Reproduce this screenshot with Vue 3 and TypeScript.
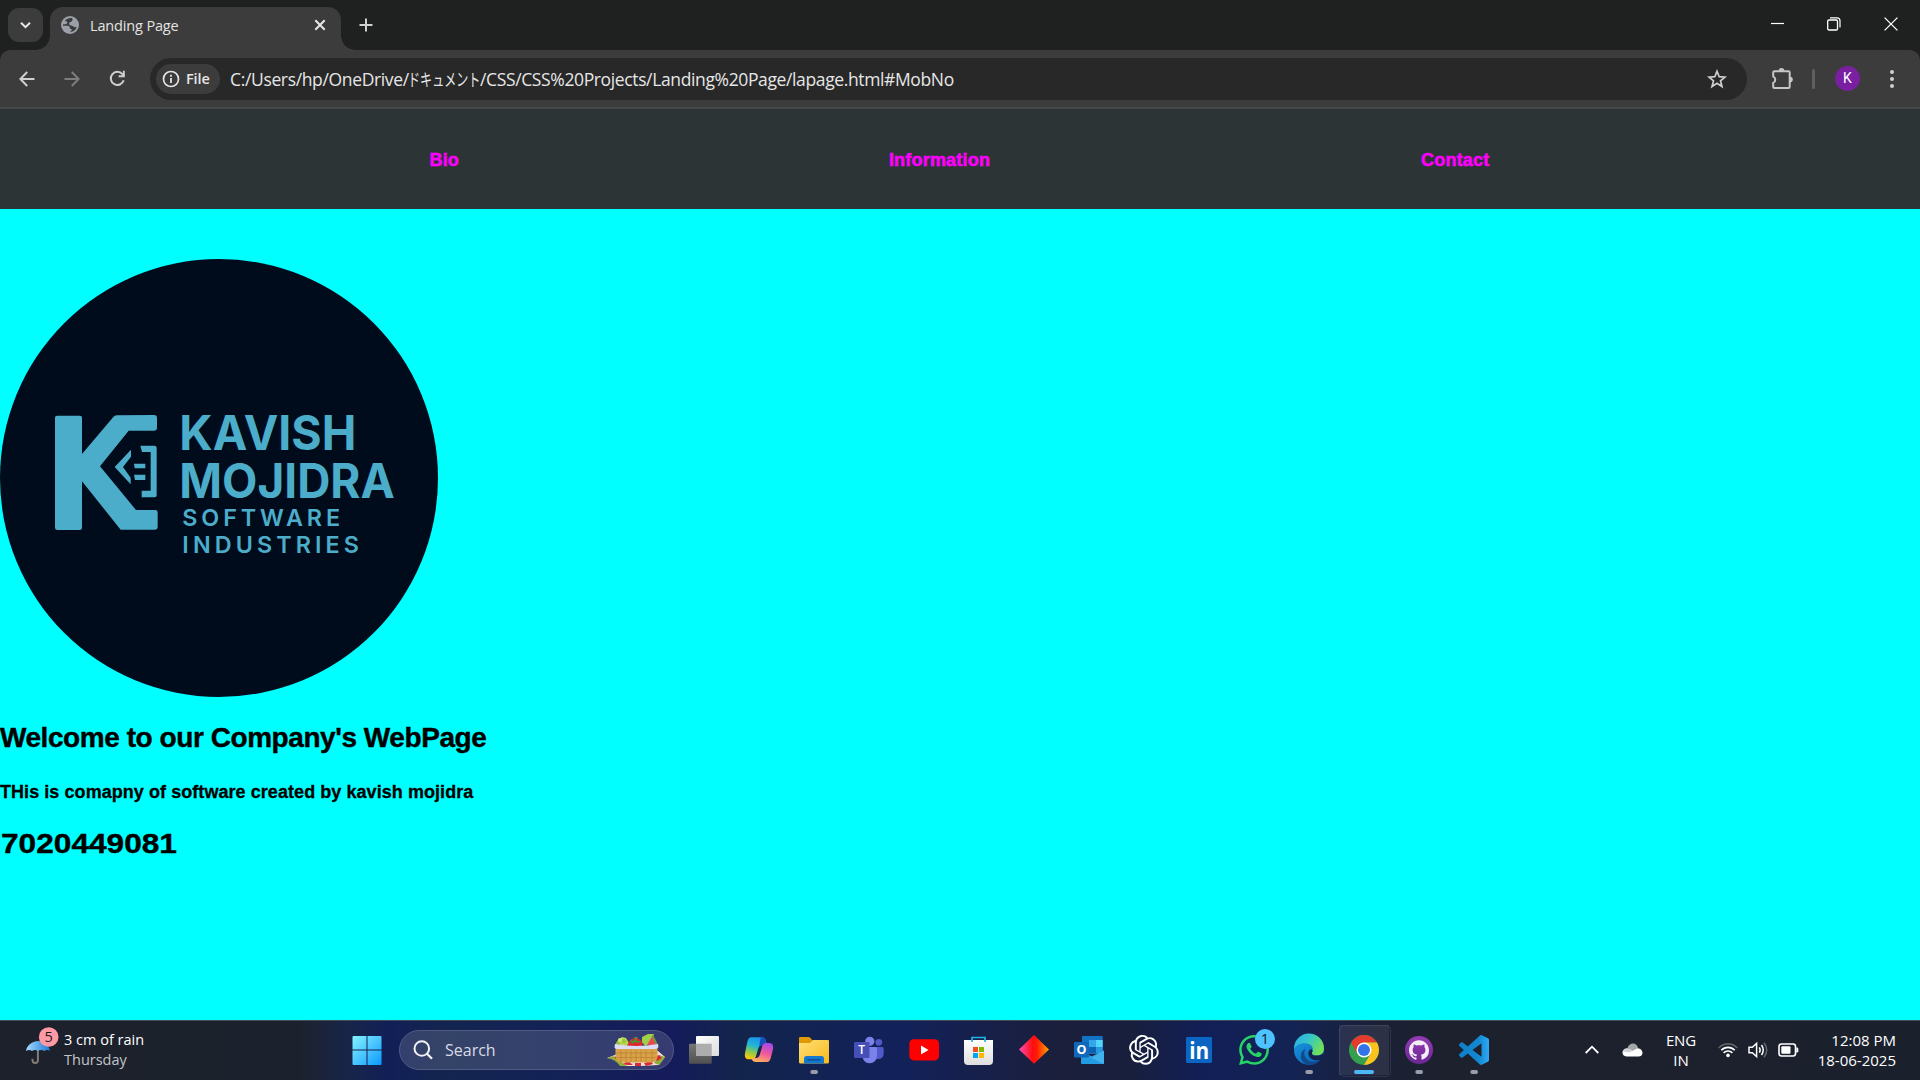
<script setup lang="ts">
interface TaskApp {
  id: string
  label: string
  running?: boolean
  active?: boolean
}

const links: string[] = ['Bio', 'Information', 'Contact']

const apps: TaskApp[] = [
  { id: 'taskview', label: 'Task View' },
  { id: 'copilot', label: 'Copilot' },
  { id: 'explorer', label: 'File Explorer', running: true },
  { id: 'teams', label: 'Teams' },
  { id: 'youtube', label: 'YouTube' },
  { id: 'store', label: 'Store' },
  { id: 'diamond', label: 'Diamond' },
  { id: 'outlook', label: 'Outlook' },
  { id: 'chatgpt', label: 'ChatGPT' },
  { id: 'linkedin', label: 'LinkedIn' },
  { id: 'whatsapp', label: 'WhatsApp' },
  { id: 'edge', label: 'Edge', running: true },
  { id: 'chrome', label: 'Chrome', running: true, active: true },
  { id: 'github', label: 'GitHub Desktop', running: true },
  { id: 'vscode', label: 'VS Code', running: true },
]
</script>

<template>
  <div class="screen">
    <header class="tabstrip">
      <button class="tab-search" aria-label="Search tabs">
        <svg width="35" height="34" viewBox="0 0 35 34"><path d="M13 14.7l4.5 4.5 4.5-4.5" fill="none" stroke="#e6e6e6" stroke-width="2" /></svg>
      </button>
      <div class="tab">
        <svg class="globe" width="18" height="18" viewBox="0 0 18 18">
          <circle cx="9" cy="9" r="9" fill="#9ba0a8" />
          <path d="M11.300 2.100C8 1.700 5.300 3 3.800 5.200c1.700-.2 2.400.3 2.500 1.400.2 1.400-1.500 1.900-4.200 1.700L2 9.700h4.600c1.500 0 2.300.8 2.200 2-.1.900.6 1.300 1.800 1.300v1.500l-1.700 1.400c3.500.2 5.900-1.900 6.800-4.900-1.600.3-2.700.2-3.300-.6-.7-1-2-.7-3.200-1.200-1.600-.7-1.500-2.900.4-3.300 1.500-.3 2.200-1 1.700-3.800z" fill="#3c3c3c" />
        </svg>
        <span class="tab-title">Landing Page</span>
        <svg width="12" height="12" viewBox="0 0 12 12"><path d="M1.300 1.300l9.400 9.400M10.700 1.300l-9.400 9.400" stroke="#e8e8e8" stroke-width="2" /></svg>
      </div>
      <svg class="plus" width="14" height="14" viewBox="0 0 14 14"><path d="M7 .5v13M.5 7h13" stroke="#d0d0d0" stroke-width="2" /></svg>
      <div class="window-controls">
        <svg width="13" height="14" viewBox="0 0 13 14"><path d="M0 6.500h13" stroke="#fff" stroke-width="1.200" /></svg>
        <svg width="14" height="14" viewBox="0 0 14 14" fill="none" stroke="#fff"><path d="M3 .9h7a3 3 0 0 1 3 3v6.600" stroke-width="1.200" /><rect x=".7" y="3" width="9.800" height="10" rx="1.200" stroke-width="1.300" /></svg>
        <svg width="14" height="14" viewBox="0 0 14 14"><path d="M.6.600l12.800 12.800M13.400.600L.6 13.400" stroke="#fff" stroke-width="1.300" /></svg>
      </div>
    </header>

    <div class="toolbar-wrap">
      <div class="toolbar">
        <svg class="back" width="16" height="16" viewBox="0 0 16 16" fill="none" stroke="#cfcfcf" stroke-width="2"><path d="M15.500 8H1.700M8.200 1L1.400 8l6.800 7" /></svg>
        <svg class="forward" width="16" height="16" viewBox="0 0 16 16" fill="none" stroke="#7d7d7d" stroke-width="2"><path d="M.5 8h13.800M7.800 1l6.800 7-6.800 7" /></svg>
        <svg class="reload" width="17" height="17" viewBox="0 0 17 17"><path d="M14.700 10.300a6.600 6.600 0 1 1-1.300-6.200l1.800 1.800" fill="none" stroke="#cfcfcf" stroke-width="2" /><path d="M15.800.8v6.400H9.600V5.300h4.300V.8z" fill="#cfcfcf" /></svg>
        <div class="omnibox">
          <div class="chip">
            <svg width="18" height="18" viewBox="0 0 18 18"><circle cx="9" cy="9" r="7.500" fill="none" stroke="#e3e3e3" stroke-width="1.700" /><path d="M9 8v5M9 4.800v1.900" stroke="#e3e3e3" stroke-width="1.800" /></svg>
            <span>File</span>
          </div>
          <span class="url"><span class="u1">C:/Users/hp/OneDrive/</span><span class="jp"><span class="jp-text">ドキュメント</span></span><span class="u2">/CSS/CSS%20Projects/Landing%20Page/lapage.html#MobNo</span></span>
          <svg class="star" width="20" height="20" viewBox="0 0 20 20"><path d="M10 2.300l2.200 5.400 5.800.4-4.500 3.700 1.500 5.700-5-3.200-5 3.200 1.500-5.700L2 8.100l5.800-.4z" fill="none" stroke="#cfcfcf" stroke-width="1.700" /></svg>
        </div>
        <svg class="puzzle" width="22" height="22" viewBox="0 0 22 22">
          <path d="M3.400 3.200h14.100q1.200 0 1.200 1.200v14.400q0 1.200-1.200 1.200H3.400q-1.200 0-1.200-1.200v-3.900a3.600 3.600 0 0 0 0-6.500v-4q0-1.200 1.200-1.200z" fill="none" stroke="#c7c7c7" stroke-width="2" />
          <path d="M7.700 2.800a2.800 2.800 0 0 1 5.600 0zM19 8.800a2.800 2.800 0 0 1 0 5.600z" fill="#c7c7c7" />
        </svg>
        <span class="divider"></span>
        <span class="avatar">K</span>
        <svg class="dots" width="4" height="20" viewBox="0 0 4 20" fill="#cfcfcf"><circle cx="2" cy="3" r="2" /><circle cx="2" cy="10" r="2" /><circle cx="2" cy="17" r="2" /></svg>
      </div>
    </div>

    <main class="page">
      <nav class="nav">
        <a v-for="link in links" :key="link" :class="link.toLowerCase()">{{ link }}</a>
      </nav>
      <svg class="logo" width="438" height="438" viewBox="0 27 1314 1314">
        <circle cx="657" cy="684" r="657" fill="#000b1b" />
        <g fill="#4badca">
          <path d="M171 497h69q6 0 6 6v109l94-111q4-5 10-5l112-1q9 0 9 9v29q0 9-9 9h-76l-86 107 108 131h58q7 0 7 7v43q0 9-9 9H362L246 694v139q0 7-7 7h-67q-7 0-7-7V503q0-6 6-6z" />
          <path d="M393 599v21l-24 31 23 32v20l-48-52z" />
          <path d="M402 641h34v14h-32zM402 674h34v16h-31z" />
          <path d="M421 587h42q7 0 7 7v142q0 6-6 6h-39v-20h27V606h-26z" />
        </g>
        <g class="logo-text">
          <text x="538" y="600" class="big" font-size="144" textLength="531" lengthAdjust="spacingAndGlyphs">KAVISH</text>
          <text x="538" y="745" class="big" font-size="142" textLength="646" lengthAdjust="spacingAndGlyphs">MOJIDRA</text>
          <text x="547" y="828" font-size="70" textLength="473" lengthAdjust="spacing">SOFTWARE</text>
          <text x="547" y="908" font-size="70" textLength="530" lengthAdjust="spacing">INDUSTRIES</text>
        </g>
      </svg>
      <h1>Welcome to our Company's WebPage</h1>
      <p>THis is comapny of software created by kavish mojidra</p>
      <h2>7020449081</h2>
    </main>

    <footer class="taskbar">
      <div class="weather">
        <svg width="36" height="44" viewBox="0 0 36 44">
          <defs><linearGradient id="umb"><stop offset="0" stop-color="#a5dcff" /><stop offset="1" stop-color="#1b78d4" /></linearGradient></defs>
          <path d="M12.900 21v12.300a2.700 2.700 0 0 1-5.400 0v-1.500" fill="none" stroke="#857b77" stroke-width="2" />
          <path d="M1 24c1-6 6-9.500 12-10 6 .5 11 4 12 10q-3-2-5.500 0-3.500-2-6.500 0-3-2-6 0-3-2-6 0z" fill="url(#umb)" />
          <circle cx="23.700" cy="10" r="9.800" fill="#ff9aa5" />
          <text x="23.700" y="15.300" text-anchor="middle" class="badge-num">5</text>
        </svg>
        <div class="weather-text"><span>3 cm of rain</span><span class="day">Thursday</span></div>
      </div>

      <svg class="start" width="30" height="30" viewBox="0 0 30 30">
        <defs><linearGradient id="win" x2="1" y2="1"><stop offset="0" stop-color="#83f3ff" /><stop offset=".5" stop-color="#4cc5ff" /><stop offset="1" stop-color="#089bff" /></linearGradient></defs>
        <path d="M1.500 1H14.500V14.500H.5V2q0-1 1-1zM15.500 1H28.500q1 0 1 1V14.500H15.500zM.5 15.500H14.500V30H1.500q-1 0-1-1zM15.500 15.500H29.500V29q0 1-1 1H15.500z" fill="url(#win)" />
      </svg>

      <div class="search">
        <svg width="20" height="20" viewBox="0 0 20 20" fill="none" stroke="#f2f3f7" stroke-width="2"><circle cx="8.800" cy="8.500" r="7.300" /><path d="M14 13.700l5 5" stroke-width="2.300" /></svg>
        <span>Search</span>
        <svg class="picnic" width="60" height="34" viewBox="0 0 60 34">
          <path d="M1 25l18-7h33l7 6-6 8-18 1H19q-8-8-18-8z" fill="#f3dfdc" />
          <path d="M1 25l6-2 14 10H14q-5-7-13-8zM53 22l6 2-6 8-5-2z" fill="#8fae35" />
          <path d="M8 24l5-2 5 4-5 3zM17 31l5-3 5 4h-6zM29 30h6v3h-6zM38 30l7-2 2 3-7 2zM49 24l4-2 3 3-5 3z" fill="#d92b35" />
          <path d="M9.500 15h42v8.500q-1 6-7 6H16.500q-7 0-7-6z" fill="#d9a248" />
          <path d="M10 20h41M10.500 24.500h40M15 17v12M20 17v12M25 17v12M30 17v12M35 17v12M40 17v12M46 17v12" stroke="#b37a2b" stroke-width=".6" />
          <path d="M9 12l3-5 4-3 4 1 3 5-2 3H9z" fill="#b5d652" />
          <circle cx="14" cy="7" r="2" fill="#cfe878" /><circle cx="18" cy="8" r="2" fill="#9dc43c" /><circle cx="12" cy="11" r="2" fill="#8fbd38" />
          <path d="M21 13l3-6 6-3 7 5-1 4z" fill="#dd2630" />
          <path d="M24 7l3 1 3-3 1 3 4 0-3 2-3-1-3 2zM28 4l4 0-2 2z" fill="#439a35" />
          <path d="M36 4l6-3 6 0-4 10-5 2-3-4z" fill="#9cd04a" />
          <path d="M47 2l5 10H41z" fill="#ef4653" /><path d="M47 2l5 10h-2L46 4z" fill="#5ba53a" />
          <path d="M9 11q21 4 43 0l.5 3q-1 2-4 2H12.500q-4 0-4-2z" fill="#dcdcf7" />
        </svg>
      </div>

      <div class="apps">
        <div v-for="app in apps" :key="app.id" class="app" :class="{ active: app.active }" :aria-label="app.label">
          <svg width="55" height="60" viewBox="0 0 55 60">
            <template v-if="app.id === 'taskview'">
              <defs>
                <linearGradient id="tv" x2="1" y2="1"><stop offset="0" stop-color="#fff" /><stop offset="1" stop-color="#dcdcdc" /></linearGradient>
                <linearGradient id="tvg" x2="0" y2="1"><stop offset="0" stop-color="#777" /><stop offset="1" stop-color="#505050" /></linearGradient>
              </defs>
              <rect x="13" y="23.700" width="22.700" height="20" rx="1" fill="url(#tvg)" />
              <rect x="20" y="16" width="23" height="20" rx="1" fill="url(#tv)" />
              <path d="M20 23.700h15.700V36H20z" fill="#adadad" />
            </template>

            <template v-else-if="app.id === 'copilot'">
              <defs>
                <linearGradient id="cpa" x1=".6" x2=".3" y2="1"><stop offset="0" stop-color="#1d8fec" /><stop offset=".4" stop-color="#22b5d5" /><stop offset=".7" stop-color="#8bcb4c" /><stop offset="1" stop-color="#ffc800" /></linearGradient>
                <linearGradient id="cpb" x1=".7" x2=".3" y2="1"><stop offset="0" stop-color="#a548e8" /><stop offset=".5" stop-color="#f0599b" /><stop offset="1" stop-color="#ffb35a" /></linearGradient>
              </defs>
              <path d="M20 17.300h11q3 0 4 4l1 4h-5q-3 0-4 4l-2 7q-1 3-4 3h-3q-5 0-4-6l2-10q1-6 4-6z" fill="url(#cpa)" />
              <path d="M30 17.300h1.500q2.500.3 3.500 4l1 4h-5q-2 0-3 2l1-6q.5-3 1-4z" fill="#174fbb" />
              <path d="M25 42h11q3 0 4-5l2-8q1-6-4-6h-3q-3 0-4 4l-2 7q-1 4-4 4h-5l1 2q1 2 4 2z" fill="url(#cpb)" />
            </template>

            <template v-else-if="app.id === 'explorer'">
              <defs><linearGradient id="fe" x2="1" y2="1"><stop offset="0" stop-color="#ffe079" /><stop offset="1" stop-color="#f8b91a" /></linearGradient></defs>
              <path d="M13 18q0-1 1-1h8.500q1 0 2 1l2 2.500h4V26H13z" fill="#dd9a05" />
              <path d="M13 23h11l3-3h15q1 0 1 1v21q0 1.500-1.500 1.500h-27Q13 43.500 13 42z" fill="url(#fe)" />
              <path d="M18 43.500v-5q0-2.500 2.500-2.500h15q2.500 0 2.500 2.500v5z" fill="#1479cc" />
              <path d="M21.500 39.800h13" stroke="#0a4f98" stroke-width="1.500" />
            </template>

            <template v-else-if="app.id === 'teams'">
              <circle cx="37.800" cy="22.300" r="3.400" fill="#5059c9" />
              <path d="M34 27h7.200q1.500 0 1.500 1.500V33q0 6-5.500 6H34z" fill="#5059c9" />
              <circle cx="28.800" cy="21.300" r="4.600" fill="#7b83eb" />
              <path d="M22 27h12.500q1.500 0 1.500 1.500V36q-.5 7-7.500 7.200Q22 43 21.500 36z" fill="#7b83eb" />
              <rect x="13" y="22" width="15.500" height="16" rx="1.300" fill="#464eb8" />
              <text x="20.700" y="34.300" class="glyph" text-anchor="middle" font-size="12">T</text>
            </template>

            <template v-else-if="app.id === 'youtube'">
              <rect x="13.300" y="19.200" width="29.800" height="21.200" rx="4.500" fill="#f00" />
              <path d="M25 25.500v9l7.500-4.500z" fill="#fff" />
            </template>

            <template v-else-if="app.id === 'store'">
              <defs><linearGradient id="st" x2="0" y2="1"><stop offset="0" stop-color="#fff" /><stop offset="1" stop-color="#dedede" /></linearGradient></defs>
              <path d="M13 20h29v21q0 4-4 4H17q-4 0-4-4z" fill="url(#st)" />
              <path d="M21 22v-4.500h13V22" fill="none" stroke="#21b5e3" stroke-width="1.700" />
              <path d="M22 27h5v5h-5z" fill="#f25022" /><path d="M28 27h5v5h-5z" fill="#7fba00" /><path d="M22 33h5v5h-5z" fill="#00a4ef" /><path d="M28 33h5v5h-5z" fill="#ffb900" />
            </template>

            <template v-else-if="app.id === 'diamond'">
              <defs><linearGradient id="dm"><stop offset="0" stop-color="#ff4fb4" /><stop offset=".45" stop-color="#ff0d12" /><stop offset=".6" stop-color="#ff1b05" /><stop offset="1" stop-color="#ffa800" /></linearGradient></defs>
              <path d="M28 15L43 29.500 28 43.800 13 29.500z" fill="url(#dm)" />
            </template>

            <template v-else-if="app.id === 'outlook'">
              <path d="M22 16h18.500q1.200 0 1.200 1.200V34H21V17q0-1 1-1z" fill="#1272c4" />
              <path d="M28 20h7v7h-7z" fill="#31a7e9" /><path d="M35 20h6.700v7H35z" fill="#50d4fa" /><path d="M28 27h7v6h-7z" fill="#0c62b3" /><path d="M35 27h6.700v6H35z" fill="#2899df" />
              <path d="M20 30l11.500 7L43 30.500V43q0 1-1 1H21q-1 0-1-1z" fill="#239be3" />
              <path d="M43 30.500V43q0 1-1 1L29 37z" fill="#50bff3" opacity=".65" />
              <rect x="13" y="22" width="15" height="15.500" rx="1.200" fill="#1068bd" />
              <text x="20.500" y="34.200" class="glyph bold" text-anchor="middle" font-size="12.500">O</text>
            </template>

            <g v-else-if="app.id === 'chatgpt'" transform="translate(13 14.900) scale(1.245)" fill="#fff">
              <path d="M22.2819 9.8211a5.9847 5.9847 0 0 0-.5157-4.9108 6.0462 6.0462 0 0 0-6.5098-2.9A6.0651 6.0651 0 0 0 4.9807 4.1818a5.9847 5.9847 0 0 0-3.9977 2.9 6.0462 6.0462 0 0 0 .7427 7.0966 5.98 5.98 0 0 0 .511 4.9107 6.051 6.051 0 0 0 6.5146 2.9001A5.9847 5.9847 0 0 0 13.2599 24a6.0557 6.0557 0 0 0 5.7718-4.2058 5.9894 5.9894 0 0 0 3.9977-2.9001 6.0557 6.0557 0 0 0-.7475-7.0729zm-9.022 12.6081a4.4755 4.4755 0 0 1-2.8764-1.0408l.1419-.0804 4.7783-2.7582a.7948.7948 0 0 0 .3927-.6813v-6.7369l2.02 1.1686a.071.071 0 0 1 .038.052v5.5826a4.504 4.504 0 0 1-4.4945 4.4944zm-9.6607-4.1254a4.4708 4.4708 0 0 1-.5346-3.0137l.142.0852 4.783 2.7582a.7712.7712 0 0 0 .7806 0l5.8428-3.3685v2.3324a.0804.0804 0 0 1-.0332.0615L9.74 19.9502a4.4992 4.4992 0 0 1-6.1408-1.6464zM2.3408 7.8956a4.485 4.485 0 0 1 2.3655-1.9728V11.6a.7664.7664 0 0 0 .3879.6765l5.8144 3.3543-2.0201 1.1685a.0757.0757 0 0 1-.071 0l-4.8303-2.7865A4.504 4.504 0 0 1 2.3408 7.872zm16.5963 3.8558L13.1038 8.364 15.1192 7.2a.0757.0757 0 0 1 .071 0l4.8303 2.7913a4.4944 4.4944 0 0 1-.6765 8.1042v-5.6772a.79.79 0 0 0-.407-.667zm2.0107-3.0231l-.142-.0852-4.7735-2.7818a.7759.7759 0 0 0-.7854 0L9.409 9.2297V6.8974a.0662.0662 0 0 1 .0284-.0615l4.8303-2.7866a4.4992 4.4992 0 0 1 6.6802 4.66zM8.3065 12.863l-2.02-1.1638a.0804.0804 0 0 1-.038-.0567V6.0742a4.4992 4.4992 0 0 1 7.3757-3.4537l-.142.0805L8.704 5.459a.7948.7948 0 0 0-.3927.6813zm1.0976-2.3654l2.602-1.4998 2.6069 1.4998v2.9994l-2.5974 1.4997-2.6067-1.4997Z" />
            </g>

            <template v-else-if="app.id === 'linkedin'">
              <rect x="15" y="17" width="26" height="26" rx="1.200" fill="#0a66c2" />
              <text x="28.200" y="39" class="linkedin" text-anchor="middle" textLength="20" lengthAdjust="spacingAndGlyphs">in</text>
            </template>

            <template v-else-if="app.id === 'whatsapp'">
              <path transform="translate(13 15) scale(1.25)" fill="#25d366" d="M17.472 14.382c-.297-.149-1.758-.867-2.030-.967-.273-.099-.471-.148-.670.15-.197.297-.767.966-.940 1.164-.173.199-.347.223-.644.075-.297-.15-1.255-.463-2.390-1.475-.883-.788-1.480-1.761-1.653-2.059-.173-.297-.018-.458.130-.606.134-.133.298-.347.446-.520.149-.174.198-.298.298-.497.099-.198.050-.371-.025-.520-.075-.149-.669-1.612-.916-2.207-.242-.579-.487-.500-.669-.510-.173-.008-.371-.010-.570-.010-.198 0-.520.074-.792.372-.272.297-1.040 1.016-1.040 2.479 0 1.462 1.065 2.875 1.213 3.074.149.198 2.096 3.200 5.077 4.487.709.306 1.262.489 1.694.625.712.227 1.360.195 1.871.118.571-.085 1.758-.719 2.006-1.413.248-.694.248-1.289.173-1.413-.074-.124-.272-.198-.570-.347m-5.421 7.403h-.004a9.870 9.870 0 0 1-5.031-1.378l-.361-.214-3.741.982.998-3.648-.235-.374a9.860 9.860 0 0 1-1.510-5.260c.001-5.450 4.436-9.884 9.888-9.884 2.640 0 5.122 1.030 6.988 2.898a9.825 9.825 0 0 1 2.893 6.994c-.003 5.450-4.437 9.884-9.885 9.884m8.413-18.297A11.815 11.815 0 0 0 12.050 0C5.495 0 .160 5.335.157 11.892c0 2.096.547 4.142 1.588 5.945L.057 24l6.305-1.654a11.882 11.882 0 0 0 5.683 1.448h.005c6.554 0 11.890-5.335 11.893-11.893a11.821 11.821 0 0 0-3.480-8.413z" />
              <circle cx="39" cy="19" r="10" fill="#4cc2ff" />
              <text x="39" y="24.300" text-anchor="middle" class="badge-num">1</text>
            </template>

            <template v-else-if="app.id === 'edge'">
              <defs>
                <linearGradient id="ed1" x2="1" y2=".5"><stop offset="0" stop-color="#29a9e8" /><stop offset=".5" stop-color="#35c6c8" /><stop offset="1" stop-color="#6fe05a" /></linearGradient>
                <linearGradient id="ed2" x2=".7" y2="1"><stop offset="0" stop-color="#1ba0e2" /><stop offset="1" stop-color="#0a63bb" /></linearGradient>
              </defs>
              <circle cx="28" cy="30" r="15" fill="url(#ed2)" />
              <path d="M13 29a15 15 0 0 1 30-1c.2 5-3 7.500-7 7.500-4.500 0-6.200-1.800-5-3.500 2-3 .5-7.500-5-8.500-6-1-11 1.500-13 5.500z" fill="url(#ed1)" />
              <path d="M24.500 29c-3 5 0 11.500 6 12.500 4 .7 7.500-.8 10.500-3.500-3 4.500-8 7-13 7-7-1-9.500-8-7.500-12 1-2.500 2.500-3.700 4-4z" fill="#114a8b" />
              <path d="M31.700 31c-1.500 3-.7 4.500 3.300 4.500 3 0 5.500-.6 7.200-2.500l.8 4-3 2.500c-5 2-11 .5-12.500-4.500-.6-3 1-5.500 3-6z" fill="#13234f" />
            </template>

            <template v-else-if="app.id === 'chrome'">
              <circle cx="28" cy="30" r="15" fill="#34a04f" />
              <path d="M15.010 22.500A15 15 0 0 1 40.990 22.500H28L21.500 33.750z" fill="#e33b2e" />
              <path d="M40.990 22.500A15 15 0 0 1 28 45L34.500 33.750 28 22.500z" fill="#fcc31e" />
              <circle cx="28" cy="30" r="7.500" fill="#fff" /><circle cx="28" cy="30" r="6" fill="#3174e8" />
            </template>

            <template v-else-if="app.id === 'github'">
              <defs><linearGradient id="gh" x2="0" y2="1"><stop offset="0" stop-color="#953bb5" /><stop offset="1" stop-color="#6a2793" /></linearGradient></defs>
              <circle cx="28" cy="30" r="14" fill="url(#gh)" />
              <path transform="translate(18 20.300) scale(1.250)" fill="#f3eef6" d="M8 0C3.580 0 0 3.580 0 8c0 3.540 2.290 6.530 5.470 7.590.400.070.550-.170.550-.380 0-.190-.010-.820-.010-1.490-2.010.370-2.530-.490-2.690-.940-.090-.230-.480-.940-.820-1.130-.280-.150-.680-.520-.010-.530.630-.010 1.080.580 1.230.820.720 1.210 1.870.870 2.330.660.070-.520.280-.870.510-1.070-1.780-.200-3.640-.890-3.640-3.950 0-.870.310-1.590.820-2.150-.080-.200-.360-1.020.080-2.120 0 0 .670-.210 2.200.820.640-.180 1.320-.270 2-.270s1.360.090 2 .270c1.530-1.040 2.200-.820 2.200-.820.440 1.100.160 1.920.080 2.120.510.560.820 1.270.820 2.150 0 3.070-1.870 3.750-3.650 3.950.290.250.540.730.540 1.480 0 1.070-.010 1.930-.010 2.200 0 .210.150.460.550.380A8.010 8.010 0 0 0 16 8c0-4.420-3.580-8-8-8z" />
            </template>

            <template v-else>
              <defs><linearGradient id="vs"><stop offset="0" stop-color="#0f7fc9" /><stop offset=".65" stop-color="#1288d2" /><stop offset="1" stop-color="#2fa9f2" /></linearGradient></defs>
              <path transform="translate(13 15) scale(1.250)" fill="url(#vs)" d="M23.150 2.587L18.210.210a1.494 1.494 0 0 0-1.705.290l-9.460 8.630-4.120-3.128a.999.999 0 0 0-1.276.057L.327 7.261A1 1 0 0 0 .326 8.740L3.899 12 .326 15.260a1 1 0 0 0 .001 1.479L1.650 17.940a.999.999 0 0 0 1.276.057l4.120-3.128 9.460 8.630a1.492 1.492 0 0 0 1.704.290l4.942-2.377A1.500 1.500 0 0 0 24 20.060V3.939a1.500 1.500 0 0 0-.850-1.352zm-5.146 14.861L10.826 12l7.178-5.448v10.896z" />
            </template>

            <rect v-if="app.active" x="18" y="50" width="20" height="4" rx="2" fill="#4cb7f5" />
            <rect v-else-if="app.running" x="24.300" y="50" width="7.700" height="4" rx="2" fill="#9a9da9" />
          </svg>
        </div>
      </div>

      <div class="tray">
        <svg class="chev" width="14" height="9" viewBox="0 0 14 9"><path d="M.7 8l6.300-6.300L13.300 8" fill="none" stroke="#fff" stroke-width="1.800" /></svg>
        <svg class="cloud" width="21" height="14" viewBox="0 0 21 14">
          <path d="M1.500 9q0-4 4-4Q7 .5 11 .5T16 5q4 .5 4.500 5l-8 1z" fill="#a4a6aa" />
          <path d="M4.500 13.500Q.5 13 .5 9.500T4.500 6q3 0 5.500 2.200L15 5.500q5 .3 5.500 4.500-.5 3.500-4 3.500z" fill="#fff" />
          <path d="M5 5.500q3.500 0 6 2.200l-4 1.800-6-1q.5-3 4-3z" fill="#d0d1d4" />
        </svg>
        <div class="lang"><span>ENG</span><span>IN</span></div>
        <svg class="wifi" width="20" height="17" viewBox="0 0 20 17" fill="none" stroke="#fff" stroke-width="1.600">
          <path d="M.7 7a12.500 12.500 0 0 1 18.600 0" stroke="#5c6068" /><path d="M3.300 9.300a9.200 9.200 0 0 1 13.400 0M5.600 11.900a6 6 0 0 1 8.800 0" /><circle cx="10" cy="14.400" r="1.800" fill="#fff" stroke="none" />
        </svg>
        <svg class="sound" width="20" height="18" viewBox="0 0 20 18" fill="none" stroke="#fff" stroke-width="1.500">
          <path d="M1 6.300h3.300L8.600 2.500v13l-4.300-3.800H1zM11.300 6.300q1.700 2.700 0 5.400M13.500 4q3.500 5 0 10" /><path d="M16 1.700q5.500 7.300 0 14.600" stroke="#62666e" />
        </svg>
        <svg class="battery" width="21" height="14" viewBox="0 0 21 14">
          <rect x="1" y="1" width="16.500" height="12" rx="2.500" fill="none" stroke="#fff" stroke-width="1.600" /><rect x="3.300" y="3.300" width="9.200" height="7.400" rx="1" fill="#fff" /><path d="M18.300 4.300q2 .2 2 1.500v2.400q0 1.300-2 1.500z" fill="#fff" />
        </svg>
        <div class="clock"><span class="time">12:08 PM</span><span class="date">18-06-2025</span></div>
      </div>
    </footer>
  </div>
</template>

<style>
body { margin: 0; overflow: hidden; }
</style>

<style scoped>
* { box-sizing: border-box; }
.screen {
  width: 1920px; height: 1080px; display: flex; flex-direction: column; overflow: hidden;
  font-family: "Open Sans", "Noto Sans", sans-serif; background: #0ff;
}
svg { display: block; flex: none; }
span { white-space: nowrap; }
.tabstrip { height: 50px; flex: none; display: flex; align-items: flex-start; background: #1f2120; padding-left: 8px; }
.tab-search { margin: 8px 7px 0 0; width: 35px; height: 34px; padding: 0; border: 0; border-radius: 11px; background: #3c3c3c; }
.tab { position: relative; margin-top: 7px; width: 291px; height: 43px; border-radius: 13px 13px 0 0; background: #3c3c3c; display: flex; align-items: center; padding: 0 15px 7px 11px; }
.tab::before, .tab::after { content: ""; position: absolute; bottom: 0; width: 14px; height: 14px; }
.tab::before { left: -14px; background: radial-gradient(circle at 0 0, transparent 13.500px, #3c3c3c 14px); }
.tab::after { right: -14px; background: radial-gradient(circle at 100% 0, transparent 13.500px, #3c3c3c 14px); }
.tab-title { flex: 1; margin-left: 11px; font-size: 14.500px; letter-spacing: -.15px; color: #e3e3e3; }
.plus { margin: 18px 0 0 18px; }
.window-controls { margin: 17px 22px 0 auto; display: flex; gap: 43px; }
.toolbar-wrap { height: 59px; flex: none; background: #1f2120; }
.toolbar { height: 59px; display: flex; align-items: center; background: #3c3c3c; border-bottom: 2px solid #474747; border-radius: 10px 10px 0 0; }
.back { margin-left: 19px; }
.forward { margin-left: 29px; }
.reload { margin-left: 29px; }
.omnibox { margin-left: 24px; width: 1597px; height: 42px; border-radius: 21px; background: #282828; display: flex; align-items: center; padding: 0 20px 0 6px; }
.chip { width: 64px; height: 30px; border-radius: 15px; background: #3c3c3c; display: flex; align-items: center; padding-left: 6px; gap: 6px; font-size: 14.500px; font-weight: 600; letter-spacing: -.1px; color: #e6e6e6; }
.url { flex: 1; margin-left: 10px; display: flex; align-items: baseline; font-size: 17.500px; color: #e6e6e6; }
.u1 { width: 178px; letter-spacing: -.35px; }
.jp { width: 72px; }
.jp-text { display: inline-block; font-family: "Noto Sans CJK JP", sans-serif; line-height: 24px; transform: scaleX(.69); transform-origin: 0 50%; }
.u2 { letter-spacing: -.37px; }
.puzzle { margin-left: 24px; }
.divider { margin-left: 19px; width: 3px; height: 20px; border-radius: 2px; background: #5f5f5f; }
.avatar { margin-left: 20px; width: 25px; height: 25px; border-radius: 50%; background: #7b1fa2; color: #fff; font: 14px/25px Roboto, sans-serif; text-align: center; }
.dots { margin-left: 30px; }

.page { height: 911px; flex: none; background: #0ff; color: #000; font-family: "Liberation Sans", Arial, sans-serif; font-weight: 700; }
.nav { height: 100px; padding-top: 1px; background: #2d3436; display: flex; justify-content: space-evenly; align-items: center; color: #f0f; font-size: 18px; line-height: 20px; letter-spacing: .2px; -webkit-text-stroke: .5px #f0f; }
.nav a { display: flex; justify-content: center; white-space: nowrap; }
.bio { width: 29px; }
.information { width: 102px; }
.contact { width: 70px; }
.logo { margin-top: 50px; }
.logo-text { font-family: Inter, "Liberation Sans", sans-serif; font-weight: 600; fill: #4badca; }
.big { font-weight: 700; }
h1, h2, p { margin: 0; white-space: nowrap; }
h1 { margin-top: 21px; font-size: 28px; line-height: 40px; letter-spacing: -.44px; -webkit-text-stroke: .4px #000; }
p { margin-top: 21px; font-size: 18px; line-height: 26px; letter-spacing: .06px; -webkit-text-stroke: .3px #000; }
h2 { width: 160px; margin: 19px 0 0 1px; font-size: 28px; line-height: 40px; transform: scaleX(1.13); transform-origin: 0 50%; -webkit-text-stroke: .4px #000; }

.taskbar {
  height: 60px; flex: none; position: relative; display: flex; align-items: center; padding-bottom: 2px; border-top: 1px solid #45495a; color: #fff;
  background: linear-gradient(90deg, #1c212b 0, #1c222d 300px, #17254a 350px, #121f57 390px, #13254f 440px, #132257 560px, #151b5b 670px, #13244c 735px, #12215a 900px, #1b1f3b 1060px, #181f3d 1130px, #121f58 1210px, #132354 1290px, #1a2038 1370px, #1d212e 1440px, #1b212c 1920px);
}
.weather { display: flex; align-items: center; width: 352px; padding-left: 25px; }
.weather svg { margin-top: -1px; }
.weather-text { margin-left: 3px; display: flex; flex-direction: column; font-size: 14.500px; line-height: 20px; }
.day { color: #c3c5ca; }
.badge-num { font: 14.500px "Open Sans", sans-serif; fill: #16191f; }
.start { margin-right: 17px; }
.search { width: 275px; height: 40px; margin-top: 1px; border-radius: 20px; border: 1px solid #4f5b86; background: rgba(255, 255, 255, .14); display: flex; align-items: center; padding: 0 7px 0 13px; font-size: 16px; color: #d8dbe6; }
.search span { flex: 1; margin-left: 12px; }
.picnic { align-self: flex-end; margin-bottom: 2px; }
.apps { display: flex; margin-left: 2px; }
.app { height: 60px; width: 55px; position: relative; }
.active { background: linear-gradient(#ffffff14, #ffffff14) 3px 5px / 50px 50px no-repeat; }
.active::before { content: ""; position: absolute; left: 3px; top: 5px; width: 50px; height: 50px; border: 1px solid #ffffff18; border-radius: 5px; }
.glyph { font-family: "Open Sans", sans-serif; fill: #fff; font-weight: 600; }
.bold { font-weight: 700; }
.linkedin { font: 700 23px "Open Sans", sans-serif; fill: #fff; }
.tray { margin-left: auto; padding-right: 24px; display: flex; align-items: center; font-size: 15px; }
.chev { margin-right: 1px; }
.cloud { margin-left: 22px; }
.lang { width: 32px; margin-left: 22px; display: flex; flex-direction: column; align-items: center; line-height: 20px; letter-spacing: -.1px; }
.wifi { margin-left: 21px; }
.sound { margin-left: 10px; }
.battery { margin-left: 10px; }
.clock { width: 97px; display: flex; flex-direction: column; align-items: flex-end; line-height: 20px; }
</style>
